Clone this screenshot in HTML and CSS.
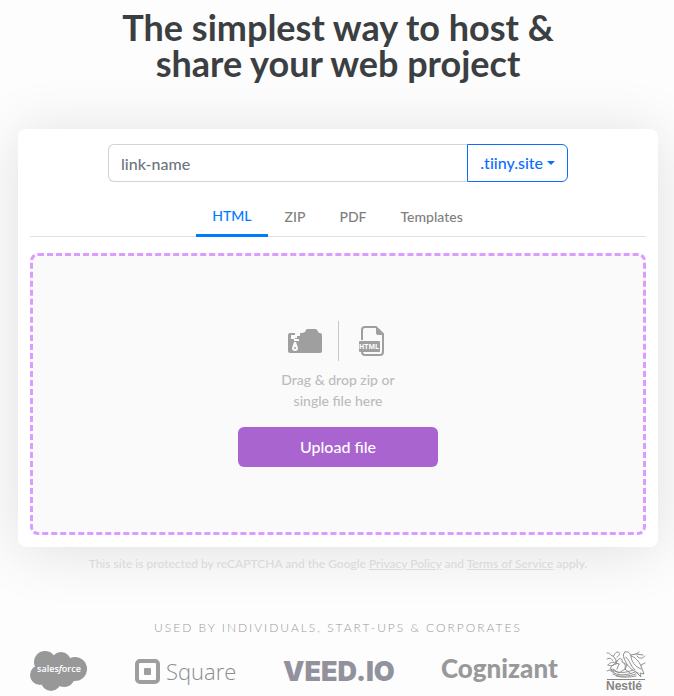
FILE: index.html
```html
<!DOCTYPE html>
<html lang="en">
<head>
  <meta charset="UTF-8">
  <meta name="viewport" content="width=device-width, initial-scale=1.0">
  <title>Host &amp; share your web project</title>
  <link rel="stylesheet" href="styles.css">
</head>
<body>
  <main class="page">
    <h1>The simplest way to host &amp;<br>share your web project</h1>

    <form class="card">
      <div class="link-group">
        <input type="text" class="link-input" placeholder="link-name" aria-label="Link name">
        <button type="button" class="domain-btn">.tiiny.site<span class="caret"></span></button>
      </div>

      <nav class="tabs">
        <a href="#html" class="tab active">HTML</a>
        <a href="#zip" class="tab">ZIP</a>
        <a href="#pdf" class="tab">PDF</a>
        <a href="#templates" class="tab">Templates</a>
      </nav>

      <div class="dropzone">
        <div class="file-icons">
          <div class="file-icon">
            <!-- zip folder -->
            <svg width="34" height="24" viewBox="0 0 34 24" aria-hidden="true">
              <path fill="#9f9f9f" d="M2 4h9v3h1V4h2l3-1 1-2 1-1h9l1 1 2 3h1a2 2 0 0 1 2 2v16a2 2 0 0 1-2 2H2a2 2 0 0 1-2-2V6a2 2 0 0 1 2-2z"/>
              <path fill="#fafafa" d="M7 4h4v3H9v2H6V8H3V6h4zM3 8h4v2h4v2H6v-2H3zM6 13h2l2 6a3 3 0 1 1-6 0z"/>
              <circle cx="7" cy="19" r="1" fill="#9f9f9f"/>
            </svg>
          </div>
          <div class="file-icon">
            <!-- html document -->
            <svg width="26" height="32" viewBox="0 0 26 32" aria-hidden="true">
              <path fill="none" stroke="#9f9f9f" stroke-width="2" d="M3 15V5a3 3 0 0 1 3-3h11l7 7v18a3 3 0 0 1-3 3H6a3 3 0 0 1-3-3v-3"/>
              <path fill="#9f9f9f" d="M17 2l7 8h-5a2 2 0 0 1-2-2z"/>
              <rect y="16" width="21" height="11" rx="1" fill="#9f9f9f"/>
              <text class="html-label" x="10" y="24" text-anchor="middle">HTML</text>
            </svg>
          </div>
        </div>
        <p class="hint">Drag &amp; drop zip or<br>single file here</p>
        <button type="button" class="upload-btn">Upload file</button>
      </div>
    </form>

    <p class="captcha">This site is protected by reCAPTCHA and the Google <a href="#privacy">Privacy Policy</a> and <a href="#terms">Terms of Service</a> apply.</p>

    <h2>Used by individuals, start-ups &amp; corporates</h2>

    <div class="logos">
      <svg width="57" height="40" viewBox="0 0 57 40" role="img" aria-label="Salesforce">
        <g fill="#989898">
          <circle cx="15" cy="11" r="11"/>
          <circle cx="31" cy="11" r="10"/>
          <circle cx="45" cy="18" r="12"/>
          <circle cx="10" cy="24" r="10"/>
          <circle cx="21" cy="30" r="10"/>
          <circle cx="34" cy="25" r="11"/>
          <circle cx="24" cy="19" r="10"/>
        </g>
        <text class="salesforce" x="29" y="21" text-anchor="middle">sales<tspan font-style="italic">f</tspan>orce</text>
      </svg>
      <svg width="100" height="40" viewBox="0 0 100 40" role="img" aria-label="Square">
        <rect x="2" y="10" width="21" height="21" rx="3" fill="none" stroke="#9e9e9e" stroke-width="4"/>
        <rect x="9" y="17" width="7" height="7" rx="1" fill="#9e9e9e"/>
        <text class="square" x="31" y="29">Square</text>
      </svg>
      <svg width="110" height="40" viewBox="0 0 110 40" role="img" aria-label="VEED.IO">
        <text class="veed" x="0" y="30">VEED.IO</text>
      </svg>
      <svg width="117" height="40" viewBox="0 0 117 40" role="img" aria-label="Cognizant">
        <text class="cognizant" x="0" y="27">Cognizant</text>
      </svg>
      <svg width="40" height="40" viewBox="0 0 40 40" role="img" aria-label="Nestlé">
        <!-- birds in the nest -->
        <g fill="none" stroke="#8f8f8f" stroke-width="1" stroke-linecap="round">
          <path d="M1 2c3-1 3 3 6 3 2 0 1-4 5-4 3 1 1 4-1 5M1 8c3-2 5 0 6 2M2 14c2-3 5-3 7-2M2 14c4 2 7 0 8-4M7 5c3 3 4 5 3 8M10 13c-5 1-7 4-4 7M1 20c3-2 5-1 7 1"/>
          <path d="M19 1c3-1 5 1 6 4 4 1 8 5 10 10M19 1c-2 2-2 4-1 6M18 7c3 8 7 12 14 15M25 5c0 5 4 11 10 13M20 6c4 4 5 10 9 13M35 15l3 8-4-1 1 4-5-5"/>
          <path d="M25 4l5-1 3-2M30 3l7 1M31 5c3 4 6 2 8 0M35 14l4-2"/>
          <path d="M12 9c2-3 5-1 4 2 3 1 4 4 3 7M12 9l-2 3 3 1M13 13l-2 5M18 12l3 2-2 4"/>
          <path d="M5 18c6 5 15 4 22 1M5 20c7 6 17 4 24 1M7 23c7 4 16 2 23 0M10 25c7 2 14 1 20 0M7 18l6 4 6-4 5 4"/>
        </g>
        <path fill="#858585" d="M1 28h38v1H1z"/>
        <text class="nestle" x="0" y="39">Nestlé</text>
      </svg>
    </div>
  </main>
</body>
</html>
```

FILE: styles.css
```css
* {
  box-sizing: border-box;
}
body {
  margin: 0;
  font-family: Lato, "Liberation Sans", sans-serif;
  font-size: 16px;
  line-height: 24px;
  color: #3b3f42;
  background-color: #fdfdfd;
}
.page {
  max-width: 720px;
  margin: 0 auto;
  padding: 9px 16px 0 18px;
}
h1 {
  margin: 0 0 48px;
  font-size: 36px;
  line-height: 36px;
  font-weight: 700;
  text-align: center;
}
.card {
  padding: 15px 12px 12px;
  background-color: #fff;
  border-radius: 8px;
  box-shadow: 0 4px 60px rgba(0, 0, 0, 0.12);
}
.link-group {
  display: flex;
  max-width: 460px;
  margin: 0 auto;
}
.link-input {
  flex: 1;
  min-width: 0;
  height: 38px;
  padding: 6px 12px;
  font: inherit;
  font-weight: 500;
  color: #495057;
  background-color: #fff;
  border: 1px solid #ced4da;
  border-right: none;
  border-radius: 6px 0 0 6px;
}
.link-input::placeholder {
  color: #6c757d;
  opacity: 1;
}
.domain-btn {
  display: flex;
  align-items: center;
  gap: 4px;
  padding: 6px 12px;
  font: inherit;
  font-weight: 500;
  font-variant-ligatures: none;
  color: #0d6efd;
  background-color: #fff;
  border: 1px solid #0d6efd;
  border-radius: 0 6px 6px 0;
  cursor: pointer;
}
.caret {
  border-top: 4px solid #0d6efd;
  border-left: 4px solid transparent;
  border-right: 4px solid transparent;
}
.tabs {
  display: flex;
  justify-content: center;
  margin-top: 15px;
  font-size: 14px;
  line-height: 21px;
  font-weight: 500;
  border-bottom: 1px solid #dee2e6;
}
.tab {
  margin-bottom: -1px;
  padding: 8px 16px;
  color: #808080;
  text-decoration: none;
  border: 1px solid transparent;
}
.tab.active {
  color: #007bff;
  border: none;
  border-bottom: 3px solid #007bff;
}
.dropzone {
  display: flex;
  flex-direction: column;
  align-items: center;
  justify-content: center;
  min-height: 282px;
  margin-top: 16px;
  padding: 24px;
  background-color: #fafafa;
  border: 3px dashed #da9dff;
  border-radius: 8px;
}
.file-icons {
  display: flex;
}
.file-icon {
  display: flex;
  align-items: center;
  height: 40px;
  padding: 0 20px;
}
.file-icon:first-child {
  padding: 0 16px;
  border-right: 1px solid #c8c8c8;
}
.html-label {
  font: 700 7px "Open Sans", sans-serif;
  fill: #fff;
}
.hint {
  margin: 8px 0 16px;
  font-size: 14px;
  line-height: 21px;
  font-weight: 500;
  text-align: center;
  color: #bcbcbc;
}
.upload-btn {
  width: 200px;
  max-width: 100%;
  height: 40px;
  font: inherit;
  font-weight: 500;
  color: #fff;
  background-color: #a964d0;
  border: none;
  border-radius: 6px;
  cursor: pointer;
}
.captcha {
  margin: 8px 0 0;
  font-size: 12px;
  line-height: 18px;
  font-weight: 500;
  text-align: center;
  color: #dadada;
}
.captcha a {
  color: inherit;
}
h2 {
  margin: 46px 0 14px;
  font-size: 12px;
  line-height: 18px;
  font-weight: 300;
  letter-spacing: 2px;
  text-align: center;
  text-transform: uppercase;
  color: #999;
}
.logos {
  display: flex;
  justify-content: space-between;
  padding: 0 12px;
}
.logos svg {
  overflow: visible;
}
.salesforce {
  font: 600 9px "Open Sans", sans-serif;
  fill: #fff;
}
.square {
  font: 300 22px "Open Sans", sans-serif;
  fill: #8c8c8c;
}
.veed {
  font: 900 27px Inter, sans-serif;
  fill: #92929c;
}
.cognizant {
  font: 900 26px Lato, sans-serif;
  fill: #999;
}
.nestle {
  font: 700 12px "Liberation Sans", sans-serif;
  fill: #858585;
}
```
